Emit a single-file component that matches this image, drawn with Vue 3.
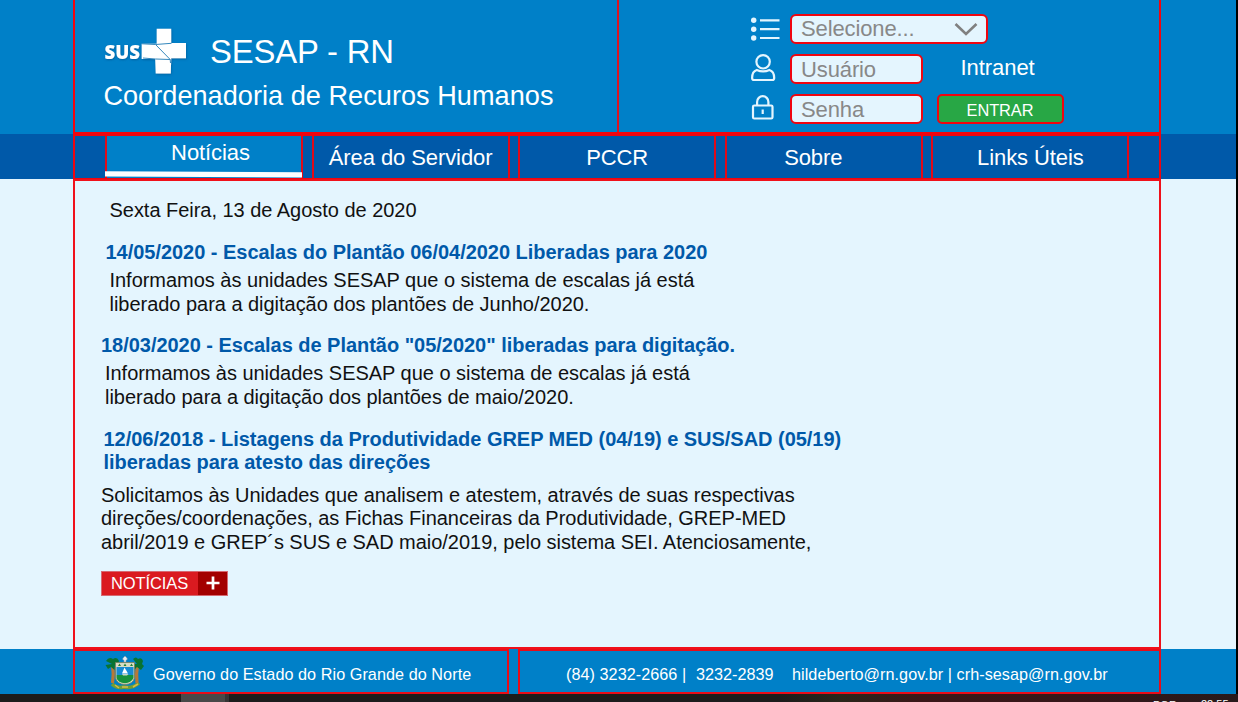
<script setup>
const tabs = ['Notícias', 'Área do Servidor', 'PCCR', 'Sobre', 'Links Úteis']
</script>

<template>
  <div class="page">
    <header class="top">
      <div class="wrap top-box">
        <div class="brand">
          <div class="brand-row">
            <svg class="sus" viewBox="0 0 92 56" width="92" height="56">
              <g filter="url(#glow)">
                <text x="3.500" y="34.400" textLength="35.500" lengthAdjust="spacingAndGlyphs" class="sus-text">SUS</text>
                <path class="white" d="M55.700 3.700H70.200V18H85V33.300H70.200L69.800 48.500H54.700L54.200 34H40.700V18.800H55.700Z" />
              </g>
              <path class="seam" d="M41 18.800L54.500 19.500L69.200 34.500L69.500 38M54.500 19.500L70.500 18.300M42 33L54.500 34L69.200 34.500" />
              <defs>
                <filter id="glow" x="-10%" y="-10%" width="130%" height="130%">
                  <feDropShadow dx="0.600" dy="1" stdDeviation="1" flood-color="#034d85" flood-opacity="0.600" />
                </filter>
              </defs>
            </svg>
            <h1>SESAP - RN</h1>
          </div>
          <h2>Coordenadoria de Recuros Humanos</h2>
        </div>
        <form class="login" @submit.prevent>
          <div class="row">
            <svg class="ico" viewBox="0 0 32 32" width="32" height="32">
              <g class="dots"><circle cx="4.700" cy="6.300" r="2.700" /><circle cx="4.700" cy="15.200" r="2.700" /><circle cx="4.700" cy="24" r="2.700" /></g>
              <path d="M11 6.300H30.500M11 15.200H30.500M11 24H30.500" />
            </svg>
            <div class="field wide">
              <span>Selecione...</span>
              <svg viewBox="0 0 24 14" width="24" height="14"><path d="M1.500 2L12 12L22.500 2" fill="none" stroke="#808080" stroke-width="2.600" /></svg>
            </div>
          </div>
          <div class="row">
            <svg class="ico" viewBox="0 0 32 32" width="32" height="32">
              <circle cx="14.100" cy="7.800" r="6.700" />
              <path d="M7.800 16C4.500 17 3.100 20.500 3.100 24Q3.100 26 5 26H23.300Q25.200 26 25.200 24C25.200 20.500 23.700 17 20.400 16Q14.100 18.800 7.800 16Z" />
            </svg>
            <div class="field">Usuário</div>
            <span class="intranet">Intranet</span>
          </div>
          <div class="row">
            <svg class="ico" viewBox="0 0 32 32" width="32" height="32">
              <rect x="4" y="11.500" width="19.500" height="13" rx="1.300" />
              <path d="M8.100 11.500V7.900A5.650 5.700 0 0 1 19.400 7.900V11.500M13.700 15.500V20" />
            </svg>
            <div class="field">Senha</div>
            <button class="enter">ENTRAR</button>
          </div>
        </form>
      </div>
    </header>

    <nav class="nav">
      <div class="wrap nav-box">
        <a v-for="(t, i) in tabs" :key="t" :class="['tab', { active: i === 0, left: i === 3 }]">
          <span>{{ t }}</span>
          <svg v-if="i === 0" class="under" viewBox="0 0 197 7" width="197" height="7"><path d="M0 0.200L197 1.200V6.500L0 5.500Z" fill="#fff" /></svg>
        </a>
      </div>
    </nav>

    <main class="main">
      <div class="wrap news">
        <p class="date">Sexta Feira, 13 de Agosto de 2020</p>
        <article class="a1">
          <h3>14/05/2020 - Escalas do Plantão 06/04/2020 Liberadas para 2020</h3>
          <p>Informamos às unidades SESAP que o sistema de escalas já está<br />liberado para a digitação dos plantões de Junho/2020.</p>
        </article>
        <article class="a2">
          <h3>18/03/2020 - Escalas de Plantão "05/2020" liberadas para digitação.</h3>
          <p>Informamos às unidades SESAP que o sistema de escalas já está<br />liberado para a digitação dos plantões de maio/2020.</p>
        </article>
        <article class="a3">
          <h3>12/06/2018 - Listagens da Produtividade GREP MED (04/19) e SUS/SAD (05/19)<br />liberadas para atesto das direções</h3>
          <p>Solicitamos às Unidades que analisem e atestem, através de suas respectivas<br />direções/coordenações, as Fichas Financeiras da Produtividade, GREP-MED<br />abril/2019 e GREP´s SUS e SAD maio/2019, pelo sistema SEI. Atenciosamente,</p>
        </article>
        <a class="more">
          <span class="more-label">NOTÍCIAS</span>
          <span class="more-plus"><svg viewBox="0 0 14 14" width="14" height="14"><path d="M0.500 7H13.500M7 0.500V13.500" stroke="#fff" stroke-width="2.700" /></svg></span>
        </a>
      </div>
    </main>

    <footer class="foot">
      <div class="wrap foot-row">
        <div class="foot-box gov">
          <svg class="arms" viewBox="0 0 40 34" width="40" height="34">
            <path d="M7 28Q12 33 19 31Q27 33 34 27" fill="none" stroke="#6f9e35" stroke-width="3.500" />
            <path d="M10 29L14 32M28 31L33 28M17 31H23" stroke="#d8b94c" stroke-width="1.500" />
            <path d="M7.500 9Q9 18 7.500 27M32.500 9Q31 18 32 27" fill="none" stroke="#b87936" stroke-width="3.200" />
            <path d="M7 8L1 5Q4 0 8 3Q12 0 14 5L12 10L10 8L9.500 14L6 11L3 13L0.500 9Z" fill="#087331" />
            <path d="M32 8L28 3Q31 0 33 3Q37 1 38 5L37 8L39 10L36 14L32 11L29 14L27 8Z" fill="#087331" />
            <path d="M10.500 6.500H29.500V22Q28 28 20 28.500Q12 28 10.500 22Z" fill="#d8dcc4" stroke="#777d59" stroke-width="0.800" />
            <path d="M11.500 11H28.500V19H11.500Z" fill="#168bd3" />
            <path d="M11.500 19H28.500V22Q26 26.800 20 27.300Q13 26.800 11.500 22Z" fill="#16913b" />
            <path d="M19.500 11.500L23 17.500H17Z" fill="#fff" /><path d="M17 18H23.500L22 19.500H18Z" fill="#c9d6c9" />
            <path d="M13 10L14.500 7.500L16 10ZM18.500 10L20 7.500L21.500 10ZM25 10L26.500 7.500L28 10Z" fill="#23843a" />
            <path d="M20 0L21.500 1.500L22.500 3L21 4.500V6H19V4.500L17.500 3L18.500 1.500Z" fill="#e8edf2" stroke="#8593a0" stroke-width="0.500" />
          </svg>
          <span>Governo do Estado do Rio Grande do Norte</span>
        </div>
        <div class="foot-box contact">
          <span class="p1">(84) 3232-2666 |</span>
          <span class="p2">3232-2839</span>
          <span class="p3">hildeberto@rn.gov.br | crh-sesap@rn.gov.br</span>
        </div>
      </div>
    </footer>

    <div class="taskbar">
      <i class="task"></i><i class="task-edge"></i>
      <span class="lang">POR</span><span class="clock">22:55</span>
    </div>
  </div>
</template>

<style>
body { margin: 0; background: #000; overflow: hidden; }
</style>

<style scoped>
* { box-sizing: border-box; }
.page { width: 1238px; height: 702px; background: #000; font-family: "Liberation Sans", Arial, sans-serif; color: #fff; overflow: hidden; white-space: nowrap; }
h1, h2, h3, p { margin: 0; font-weight: normal; }
svg { display: block; flex: none; }
.top, .nav, .main, .foot { width: 1236px; padding-left: 73px; }
.wrap { width: 1088px; }

.top { height: 134px; background: #0080c8; }
.top-box { display: flex; height: 134px; border: solid #f5040c; border-width: 0 2px 2px; }
.brand { width: 544px; padding: 25px 0 0 28px; border-right: 2px solid #dc1420; }
.brand-row { display: flex; height: 52px; }
.sus { margin-left: -2px; }
.sus-text { font: 800 19.600px "Open Sans", "Liberation Sans", sans-serif; fill: #fff; }
.white { fill: #fff; }
.seam { fill: none; stroke: #3588bd; stroke-width: 1; }
h1 { margin-left: 17px; font-size: 32.8px; line-height: 38px; letter-spacing: -0.140px; padding-top: 8px; }
h2 { font-size: 27.100px; line-height: 32px; margin-top: 3px; padding-left: 0.400px; letter-spacing: 0.040px; }

.login { padding: 14px 0 0 130px; display: flex; flex-direction: column; gap: 10px; }
.row { display: flex; height: 30px; }
.ico { fill: none; stroke: #e4f5fe; stroke-width: 2.200; margin-right: 9px; }
.dots { fill: #e4f5fe; stroke: none; }
.field { display: flex; align-items: center; justify-content: space-between; width: 132.500px; height: 30px; padding: 0 8px 0 9px; border: 2px solid #f0050f; border-radius: 6px; background: #e4f5fe; color: #888; font-size: 22px; line-height: 27px; letter-spacing: -0.120px; }
.wide { width: 198px; }
.wide span { padding-bottom: 2px; }
.intranet { margin-left: 38px; font-size: 22px; line-height: 27px; letter-spacing: -0.060px; }
.enter { width: 127px; height: 30px; margin-left: 14px; padding: 3px 0 0; border: 2px solid #f0050f; border-radius: 5px; background: #28a745; color: #fff; font: 16.400px/23px "Liberation Sans", Arial, sans-serif; letter-spacing: -0.100px; }

.nav { height: 45px; background: #0059a9; }
.nav-box { display: grid; grid-template-columns: repeat(5, 198px); gap: 8.600px; height: 45px; padding-left: 30px; border: 2px solid #f0050f; border-bottom-width: 1.500px; }
.tab { position: relative; height: 42px; border: solid #e30a18; border-width: 0 2px; text-align: center; font-size: 22px; line-height: 44px; letter-spacing: -0.090px; }
.left { padding-right: 21px; }
.active { background: #0080c8; padding-left: 13px; line-height: 33px; }
.under { position: absolute; left: -2px; top: 35px; }

.main { height: 470px; background: #e4f5fe; }
.news { height: 470px; border: 2px solid #f0101a; padding: 17px 0 0 26px; color: #111; font-size: 20px; letter-spacing: -0.030px; }
.date { line-height: 24px; padding-left: 8.500px; }
h3 { font-size: 20px; font-weight: bold; line-height: 23.400px; color: #0059a9; }
.a1 { margin-top: 18.500px; padding-left: 4.500px; }
.a1 p { padding-left: 4px; margin-top: 4.500px; line-height: 24px; }
.a2 { margin-top: 17.500px; }
.a2 p { padding-left: 4px; margin-top: 3.500px; line-height: 24px; }
.a3 { margin-top: 19px; }
.a3 h3 { padding-left: 2.500px; }
.a3 p { margin-top: 9px; line-height: 23.500px; }
.more { display: flex; width: 127px; height: 25px; margin-top: 16.500px; border: 1px solid #d66a72; color: #fff; }
.more-label { width: 96px; background: #da1a20; padding-left: 9px; font-size: 16.500px; line-height: 23px; letter-spacing: -0.100px; }
.more-plus { width: 29px; background: #a30000; display: grid; place-items: center; }

.foot { height: 45px; background: #0080c8; }
.foot-row { display: flex; gap: 9px; }
.foot-box { display: flex; height: 45px; border: 2px solid #e80c18; font-size: 16.200px; line-height: 47px; }
.gov { width: 436px; padding-left: 30px; letter-spacing: 0.060px; }
.gov .arms { margin: 5px 8px 0 0; }
.contact { width: 643px; padding-left: 46px; }
.p1 { width: 130px; letter-spacing: 0.050px; }
.p2 { width: 96px; }
.p3 { letter-spacing: 0.050px; }

.taskbar { display: flex; height: 8px; overflow: hidden; background: linear-gradient(90deg, #1c1c1c 0 780px, #29261a 840px, #3a1718 920px, #351719 1080px, #281a1b 1238px); font-size: 11px; line-height: 13px; }
.task { width: 44px; margin-left: 181px; background: #484848; }
.task-edge { width: 4px; background: #343434; }
.lang { width: 48px; margin-left: 924px; padding-top: 5px; }
.clock { padding-top: 4px; }
</style>
